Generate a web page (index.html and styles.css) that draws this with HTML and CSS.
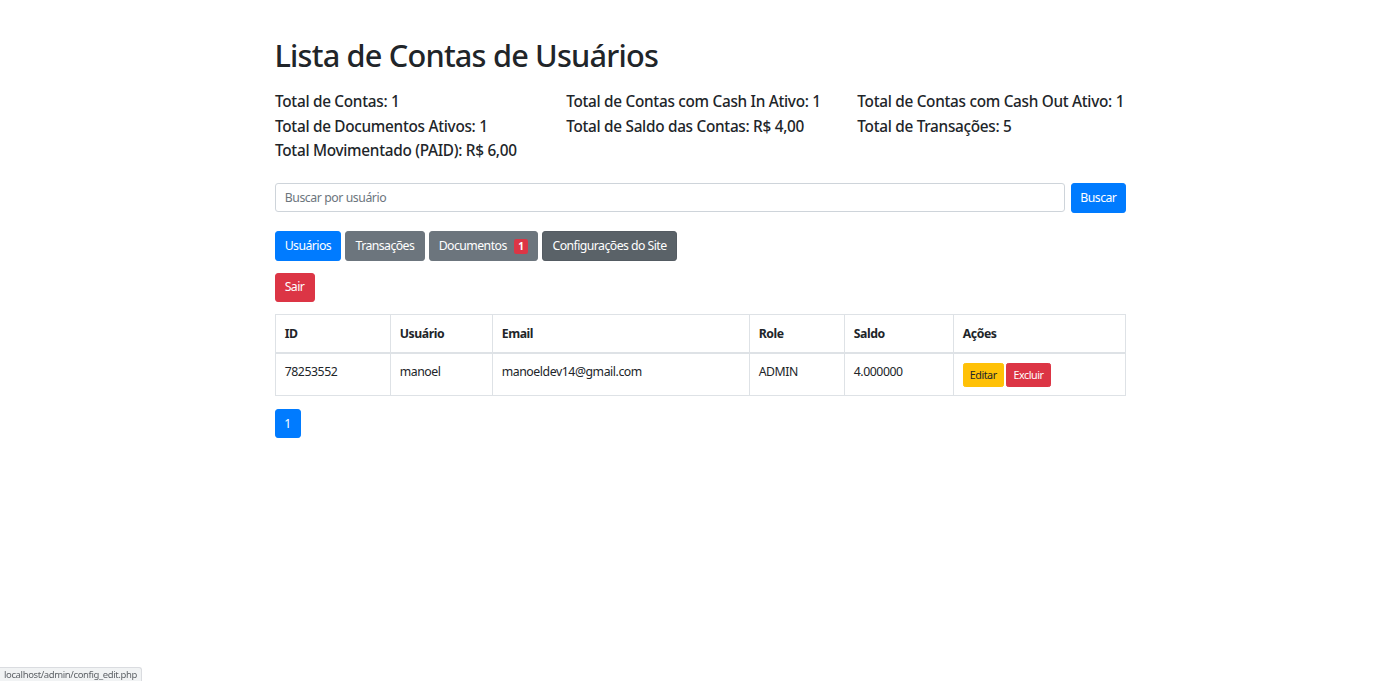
FILE: index.html
```html
<!DOCTYPE html>
<html lang="pt-BR">
<head>
<meta charset="utf-8">
<title>Lista de Contas de Usuários</title>
<link rel="stylesheet" href="styles.css">
</head>
<body>
<div class="container">
  <h1 class="title">Lista de Contas de Usuários</h1>
  <div class="stats">
    <div class="stat-col">
      <h5 class="stat">Total de Contas: 1</h5>
      <h5 class="stat">Total de Documentos Ativos: 1</h5>
      <h5 class="stat">Total Movimentado (PAID): R$ 6,00</h5>
    </div>
    <div class="stat-col">
      <h5 class="stat">Total de Contas com Cash In Ativo: 1</h5>
      <h5 class="stat">Total de Saldo das Contas: R$ 4,00</h5>
    </div>
    <div class="stat-col">
      <h5 class="stat">Total de Contas com Cash Out Ativo: 1</h5>
      <h5 class="stat">Total de Transações: 5</h5>
    </div>
  </div>

  <form class="search">
    <input class="search-input" type="text" placeholder="Buscar por usuário">
    <button class="btn btn-primary btn-search" type="button">Buscar</button>
  </form>

  <div class="nav-buttons">
    <a class="btn btn-primary">Usuários</a>
    <a class="btn btn-secondary">Transações</a>
    <a class="btn btn-secondary">Documentos <span class="badge">1</span></a>
    <a class="btn btn-secondary hover">Configurações do Site</a>
  </div>

  <div class="logout">
    <a class="btn btn-danger">Sair</a>
  </div>

  <table class="table">
    <thead>
      <tr>
        <th class="c-id">ID</th>
        <th class="c-user">Usuário</th>
        <th class="c-email">Email</th>
        <th class="c-role">Role</th>
        <th class="c-saldo">Saldo</th>
        <th class="c-acoes">Ações</th>
      </tr>
    </thead>
    <tbody>
      <tr>
        <td>78253552</td>
        <td>manoel</td>
        <td>manoeldev14@gmail.com</td>
        <td>ADMIN</td>
        <td>4.000000</td>
        <td class="actions"><a class="btn btn-sm btn-warning">Editar</a> <a class="btn btn-sm btn-danger">Excluir</a></td>
      </tr>
    </tbody>
  </table>

  <ul class="pagination">
    <li class="page-item"><a class="page-link">1</a></li>
  </ul>
</div>
<div class="statusbar">localhost/admin/config_edit.php</div>
</body>
</html>
```

FILE: styles.css
```css
* { box-sizing: border-box; }
html, body { height: 100%; }
body {
  margin: 0;
  font-family: "Segoe UI", "Noto Sans", "Open Sans", Arial, sans-serif;
  font-size: 12.27px;
  line-height: 1.5;
  letter-spacing: -0.035em;
  color: #212529;
  background: #fff;
}
.container {
  width: 851px;
  margin: 0 auto;
  padding-top: 36.8px;
}
.title {
  font-size: 30.7px;
  font-weight: 500;
  line-height: 1.2;
  letter-spacing: -0.026em;
  margin: 0 0 18.4px;
}
.stats {
  display: grid;
  grid-template-columns: repeat(3, 1fr);
  column-gap: 23px;
  padding-left: 0.5px;
}
.stat {
  font-size: 15.34px;
  font-weight: 500;
  line-height: 1.2;
  letter-spacing: -0.019em;
  margin: 0 0 6.14px;
  white-space: nowrap;
}
.search {
  display: flex;
  gap: 6.5px;
  margin-top: 17.5px;
}
.search-input {
  flex: 1;
  height: 29.2px;
  padding: 4.6px 9.2px;
  font: inherit;
  letter-spacing: -0.035em;
  color: #495057;
  border: 1px solid #ced4da;
  border-radius: 3.07px;
  outline: none;
}
.search-input::placeholder { color: #6c757d; }
.btn {
  display: inline-block;
  padding: 4.6px 9.2px;
  font: inherit;
  font-size: 12.27px;
  line-height: 18.4px;
  letter-spacing: -0.045em;
  border: 1px solid transparent;
  border-radius: 3.07px;
  color: #fff;
  text-decoration: none;
  cursor: pointer;
  white-space: nowrap;
}
.btn-search { padding-left: 8.2px; padding-right: 8.2px; }
.btn-primary { background: #007bff; border-color: #007bff; }
.btn-secondary { background: #6c757d; border-color: #6c757d; }
.btn-secondary.hover { background: #5a6268; border-color: #545b62; }
.btn-danger { background: #dc3545; border-color: #dc3545; }
.btn-warning { background: #ffc107; border-color: #ffc107; color: #212529; }
.btn-sm {
  padding: 3.07px 6.14px;
  font-size: 10.74px;
  line-height: 16.1px;
  border-radius: 2.3px;
}
.nav-buttons {
  margin-top: 18.5px;
  display: flex;
  gap: 4px;
}
.badge {
  display: inline-block;
  margin-left: 5px;
  padding: 0 4px;
  font-size: 10px;
  font-weight: 700;
  line-height: 15px;
  letter-spacing: 0;
  background: #dc3545;
  color: #fff;
  border-radius: 2.3px;
  vertical-align: 0;
}
.logout { margin-top: 12px; }
.table {
  width: 100%;
  margin-top: 12px;
  border-collapse: collapse;
  color: #212529;
}
.table th, .table td {
  border: 1px solid #dee2e6;
  padding: 9.5px 9.2px 9px;
  text-align: left;
  vertical-align: top;
  line-height: 18.4px;
}
.table th { font-weight: 700; border-bottom-width: 2px; padding-bottom: 8.2px; }
.table td.actions { padding-top: 9px; padding-bottom: 8.5px; }
.c-id { width: 115px; }
.c-user { width: 102px; }
.c-email { width: 257px; }
.c-role { width: 95px; }
.c-saldo { width: 109px; }
.pagination {
  list-style: none;
  margin: 12.5px 0 0;
  padding: 0;
  display: flex;
}
.page-link {
  display: block;
  width: 26px;
  height: 29.4px;
  line-height: 27.4px;
  text-align: center;
  background: #007bff;
  border: 1px solid #007bff;
  color: #fff;
  border-radius: 3.07px;
}
.statusbar {
  position: fixed;
  left: 0;
  bottom: 0;
  padding: 0 4px;
  height: 14px;
  line-height: 14px;
  font-size: 9.5px;
  letter-spacing: -0.04em;
  color: #5f6368;
  background: #f1f3f4;
  border-top: 1px solid #dadce0;
  border-right: 1px solid #dadce0;
  border-top-right-radius: 3px;
}
```
